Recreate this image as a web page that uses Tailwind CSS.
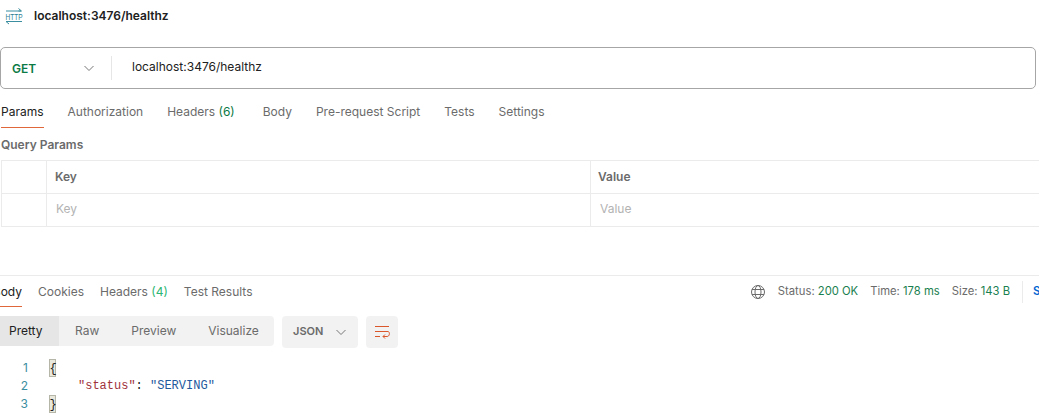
<!DOCTYPE html>
<html>
<head>
<meta charset="utf-8">
<script src="https://cdn.jsdelivr.net/npm/@tailwindcss/browser@4"></script>
</head>
<body class="bg-white overflow-hidden w-[1039px] h-[418px] font-['Inter',sans-serif] text-[12px] text-[#6b6b6b]">
<div class="flex flex-col h-[418px] overflow-hidden">
  <div class="flex items-center h-[32px] pl-[5px] gap-[11px]">
    <svg width="18" height="17" viewBox="0 0 18 17" fill="none" class="shrink-0">
      <path d="M1 3H16M13.5 0.5L16.5 3L13.5 3" stroke="#3a8ea0" stroke-width="1"/>
      <path d="M1 13.5H17M3.5 13.5L1 13.5L4 16" stroke="#3a8ea0" stroke-width="1"/>
      <text x="0.5" y="11.5" font-size="9" textLength="17" lengthAdjust="spacingAndGlyphs" font-family="Liberation Sans" fill="#2a7f94">HTTP</text>
    </svg>
    <span class="font-semibold text-[#212121]">localhost:3476/healthz</span>
  </div>
  <div class="flex items-center h-[42px] mt-[15px] mr-[3px] border border-[#a6a6a6] rounded-[5px]">
    <span class="w-[82px] pl-[11px] pt-[2px] font-semibold text-[#0b7a45]">GET</span>
    <svg width="12" height="12" viewBox="0 0 12 12" fill="none" class="mr-[16px]"><path d="M1.5 4L6 8.5L10.5 4" stroke="#777" stroke-width="1"/></svg>
    <div class="w-px h-[24px] bg-[#e6e6e6]"></div>
    <span class="ml-[20px] -mt-[2px] text-[#212121]">localhost:3476/healthz</span>
  </div>
  <div class="flex h-[36px] mt-[3px] pt-[4px] pl-[1px] items-center">
    <span class="relative h-full flex items-center text-[#212121]">Params<span class="absolute left-0 right-0 bottom-0 h-px bg-[#e0673a]"></span></span>
    <span class="ml-[24px]">Authorization</span>
    <span class="ml-[24px]">Headers <span class="text-[#0b7a45]">(6)</span></span>
    <span class="ml-[28px]">Body</span>
    <span class="ml-[24px]">Pre-request Script</span>
    <span class="ml-[24px]">Tests</span>
    <span class="ml-[24px]">Settings</span>
  </div>
  <div class="h-[32px] pl-[1px] pt-[2px] flex items-center font-semibold text-[#6b6b6b]">Query Params</div>
  <div class="grid grid-cols-[45px_544px_1fr] border-t border-l border-[#ebebeb] ml-[1px] h-[67px]">
    <div class="h-[33px] border-r border-b border-[#ebebeb]"></div>
    <div class="h-[33px] border-r border-b border-[#ebebeb] flex items-center pl-[8px] font-semibold">Key</div>
    <div class="h-[33px] border-b border-[#ebebeb] flex items-center pl-[7px] font-semibold">Value</div>
    <div class="h-[33px] border-r border-b border-[#ebebeb]"></div>
    <div class="h-[33px] border-r border-b border-[#ebebeb] flex items-center pl-[9px] pb-[2px] text-[#b3b3b3]">Key</div>
    <div class="h-[33px] border-b border-[#ebebeb] flex items-center pl-[9px] pb-[2px] text-[#b3b3b3]">Value</div>
  </div>
  <div class="mt-[48px] border-t border-[#ebebeb] flex items-center h-[32px]">
    <span class="relative h-full flex items-center text-[#212121] overflow-hidden w-[22px] justify-end">Body<span class="absolute left-0 right-0 bottom-0 h-px bg-[#e0673a]"></span></span>
    <span class="ml-[16px]">Cookies</span>
    <span class="ml-[16px]">Headers <span class="text-[#2bb673]">(4)</span></span>
    <span class="ml-[16px]">Test Results</span>
    <div class="ml-auto flex items-center text-[11.25px]">
      <svg width="16" height="16" viewBox="0 0 16 16" fill="none" stroke="#6b6b6b" class="mr-[12px]"><circle cx="8" cy="8" r="6.5"/><ellipse cx="8" cy="8" rx="3" ry="6.5"/><path d="M2 5.5H14M2 10.5H14"/></svg>
      <span>Status: <span class="text-[#1a8050]">200 OK</span></span>
      <span class="ml-[12px]">Time: <span class="text-[#1a8050]">178 ms</span></span>
      <span class="ml-[12px]">Size: <span class="text-[#1a8050]">143 B</span></span>
      <div class="w-px h-[22px] bg-[#ebebeb] ml-[12px]"></div>
      <span class="ml-[10px] w-[6px] overflow-hidden font-semibold text-[#0265d2]">Save</span>
    </div>
  </div>
  <div class="flex items-start mt-[9px] h-[34px]">
    <div class="flex h-[30px] items-center bg-[#f2f2f2] rounded-r-[4px] w-[274px]">
      <span class="h-full w-[59px] flex items-center pl-[9px] bg-[#e6e6e6] text-[#212121]">Pretty</span>
      <span class="ml-[16px]">Raw</span>
      <span class="ml-[32px]">Preview</span>
      <span class="ml-[32px]">Visualize</span>
    </div>
    <div class="ml-[8px] w-[76px] h-[32px] pb-[1px] bg-[#f2f2f2] rounded-[4px] flex items-center pl-[11px] gap-[12px] font-semibold text-[11px]">JSON
      <svg width="12" height="12" viewBox="0 0 12 12" fill="none"><path d="M1.5 4L6 8.5L10.5 4" stroke="#777" stroke-width="1"/></svg>
    </div>
    <div class="ml-[8px] w-[32px] h-[32px] bg-[#f2f2f2] rounded-[4px] flex items-center justify-center">
      <svg width="16" height="16" viewBox="0 0 16 16" fill="none" stroke="#d9572b"><path d="M1 2.5H15M1 7.5H14C16 7.5 16 12.5 13 12.5H9M11 10.5L9 12.5L11 14.5M1 12.5H6"/></svg>
    </div>
  </div>
  <div class="font-['Liberation_Mono','DejaVu_Sans_Mono',monospace] text-[12px] leading-[18px] mt-[9px]">
    <div class="flex h-[18px]"><span class="w-[28px] text-right text-[#3a8ea0] font-['Inter',sans-serif]">1</span><span class="ml-[21px] w-[7px] bg-[#e8e8dc] border border-[#b5b5a8] text-[#212121] flex justify-center"><span class="tracking-[-1px]">{</span></span></div>
    <div class="flex h-[18px]"><span class="w-[28px] text-right text-[#3a8ea0] font-['Inter',sans-serif]">2</span><span class="ml-[50px] text-[#a0323c]">"status"</span><span class="text-[#212121]">:&nbsp;</span><span class="text-[#1f5a9e]">"SERVING"</span></div>
    <div class="flex h-[18px]"><span class="w-[28px] text-right text-[#3a8ea0] font-['Inter',sans-serif]">3</span><span class="ml-[21px] w-[7px] bg-[#e8e8dc] border border-[#b5b5a8] text-[#212121] flex justify-center"><span class="tracking-[-1px]">}</span></span></div>
  </div>
</div>
</body>
</html>
